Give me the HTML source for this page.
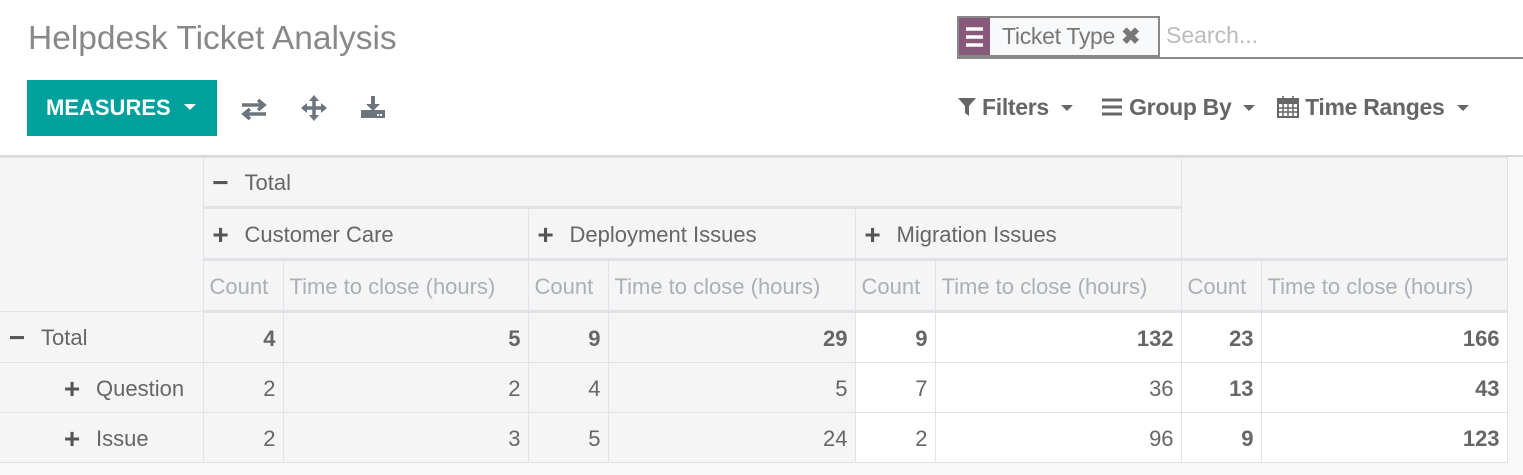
<!DOCTYPE html>
<html><head><meta charset="utf-8"><style>
body{margin:0;width:1523px;height:475px;background:#f8f8f8;font-family:"Liberation Sans",sans-serif;overflow:hidden;position:relative;color:#666}
.top{position:absolute;left:0;top:0;width:1523px;height:155px;background:#fff;border-bottom:2px solid #d8d8d8}
.title{position:absolute;left:28px;top:20px;font-size:33.5px;color:#888}
.meas{position:absolute;left:27px;top:80px;width:190px;height:56px;background:#00a09d;color:#fff;font-weight:bold;font-size:22px;line-height:56px;text-indent:19px}
.meas:after{content:"";position:absolute;left:157px;top:24px;border:6px solid transparent;border-top:6px solid #fff}
.ic{position:absolute;top:95px}
.search{position:absolute;left:957px;top:16px;width:566px;height:41px;border-bottom:2px solid #888}
.tag{position:absolute;left:0;top:0;width:199px;height:37px;border:2px solid #888;background:#f8f9fa}
.tag .h{position:absolute;left:0;top:0;width:31px;height:37px;background:#875a7b}
.tag .t{position:absolute;left:43px;top:5px;font-size:23px;color:#777;letter-spacing:-0.3px}
.ph{position:absolute;left:209px;top:6px;font-size:23px;color:#bbb}
.dd{position:absolute;top:94px;font-size:23px;font-weight:bold;color:#666;letter-spacing:-0.3px}
.car{display:inline-block;border:6px solid transparent;border-top:6px solid #666;vertical-align:middle;margin-left:12px;margin-top:4px}
table{position:absolute;left:0;top:157px;border-collapse:collapse;font-size:22px;table-layout:fixed;width:1507px}
td{border:1px solid #dfe2e6;height:47px;padding:2px 7px 0;white-space:nowrap;background:#f5f5f5;overflow:hidden}
tr td:first-child{border-left:none}
.w{background:#fff}
.r{text-align:right}.b{font-weight:bold}
.m{color:#aab0b7;padding:2px 6px 0}
.tb{border-bottom:3px solid #dfe2e6}
.pl{font-weight:bold;margin-right:14px;font-size:28px;color:#555;display:inline-block;width:20px;text-align:center;line-height:20px;vertical-align:-2px}
</style></head><body>
<div class="top">
<div class="title">Helpdesk Ticket Analysis</div>
<div class="meas">MEASURES</div>
<svg class="ic" style="left:241px;top:97px" width="26" height="24" viewBox="0 0 26 24"><path d="M1 8H21M17 3l6 5-6 5" stroke="#6c757d" stroke-width="3.5" fill="none"/><path d="M25 17H5M9 12l-6 5 6 5" stroke="#6c757d" stroke-width="3.5" fill="none"/></svg>
<svg class="ic" style="left:301px;top:95px" width="26" height="26" viewBox="0 0 26 26"><path d="M13 2v22M2 13h22" stroke="#6c757d" stroke-width="3.5"/><path d="M13 0l-5 6h10zM13 26l-5-6h10zM0 13l6-5v10zM26 13l-6-5v10z" fill="#6c757d"/></svg>
<svg class="ic" style="left:361px;top:96px" width="24" height="22" viewBox="0 0 24 22"><path d="M12 0v11" stroke="#6c757d" stroke-width="4"/><path d="M5 8l7 7 7-7z" fill="#6c757d"/><rect x="0" y="14" width="24" height="8" fill="#6c757d"/><rect x="16" y="18" width="2" height="2" fill="#fff"/><rect x="19" y="18" width="2" height="2" fill="#fff"/></svg>
<div class="search"><div class="tag"><div class="h"><svg width="31" height="37"><path d="M7 11h17M7 19h17M7 27h17" stroke="#fff" stroke-width="3.5"/></svg></div><div class="t">Ticket Type <b style="color:#777">✖</b></div></div><div class="ph">Search...</div></div>
<div class="dd" style="left:958px"><svg width="20" height="18" viewBox="0 0 20 18" style="vertical-align:-1px;margin-right:4px"><path d="M0 0h18l-7 8v10l-4-3V8z" fill="#666"/></svg>Filters<span class="car"></span></div>
<div class="dd" style="left:1101px"><svg width="22" height="18" viewBox="0 0 22 18" style="vertical-align:-1px"><path d="M1 2h20M1 9h20M1 16h20" stroke="#666" stroke-width="3"/></svg> Group By<span class="car"></span></div>
<div class="dd" style="left:1277px"><svg width="22" height="22" viewBox="0 0 22 22" style="vertical-align:-3px"><rect x="1" y="3" width="20" height="18" fill="none" stroke="#666" stroke-width="2"/><rect x="1" y="3" width="20" height="5" fill="#666"/><path d="M6 0v5M16 0v5M1 12h20M1 16h20M6 8v13M11 8v13M16 8v13" stroke="#666" stroke-width="1.5"/></svg> Time Ranges<span class="car"></span></div>
</div>
<table>
<colgroup><col style="width:203px"><col style="width:80px"><col style="width:245px"><col style="width:80px"><col style="width:247px"><col style="width:80px"><col style="width:246px"><col style="width:80px"><col style="width:246px"></colgroup>
<tr><td rowspan="3"></td><td colspan="6" class="tb" style="height:46px"><span class="pl">−</span>Total</td><td colspan="2" rowspan="2" class="tb"></td></tr>
<tr><td colspan="2" class="tb"><span class="pl">+</span>Customer Care</td><td colspan="2" class="tb"><span class="pl">+</span>Deployment Issues</td><td colspan="2" class="tb"><span class="pl">+</span>Migration Issues</td></tr>
<tr><td class="m tb">Count</td><td class="m tb">Time to close (hours)</td><td class="m tb">Count</td><td class="m tb">Time to close (hours)</td><td class="m tb">Count</td><td class="m tb">Time to close (hours)</td><td class="m tb">Count</td><td class="m tb">Time to close (hours)</td></tr>
<tr><td><span class="pl">−</span>Total</td><td class="r b">4</td><td class="r b">5</td><td class="r b">9</td><td class="r b">29</td><td class="r b w">9</td><td class="r b w">132</td><td class="r b w">23</td><td class="r b w">166</td></tr>
<tr><td style="padding-left:62px"><span class="pl">+</span>Question</td><td class="r">2</td><td class="r">2</td><td class="r">4</td><td class="r">5</td><td class="r w">7</td><td class="r w">36</td><td class="r b w">13</td><td class="r b w">43</td></tr>
<tr><td style="padding-left:62px"><span class="pl">+</span>Issue</td><td class="r">2</td><td class="r">3</td><td class="r">5</td><td class="r">24</td><td class="r w">2</td><td class="r w">96</td><td class="r b w">9</td><td class="r b w">123</td></tr>
</table>
</body></html>
